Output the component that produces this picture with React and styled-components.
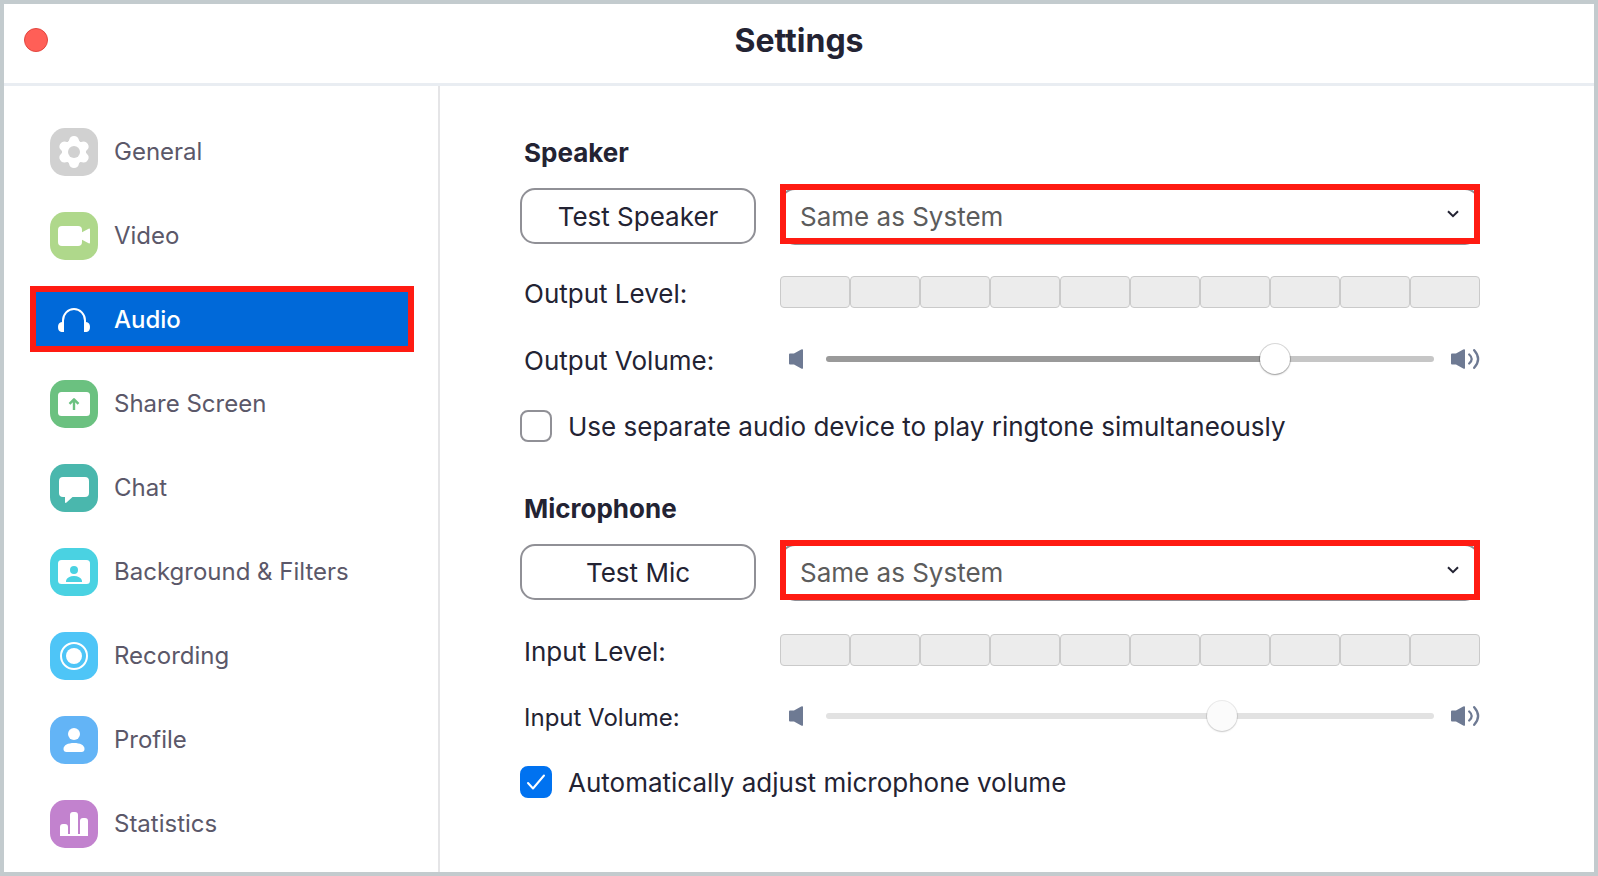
import React, { useState } from "react";
import styled, { createGlobalStyle } from "styled-components";

const colors = {
    frame: "#c3cbce",
    line: "#e5e5e7",
    text: "#232333",
    muted: "#5b5869",
    control: "#909096",
    red: "#ff1b12",
    blue: "#0069d9",
    checked: "#0072f0",
    speaker: "#6e7a93",
};

const categories = [
    { name: "General", color: "#d1d1d1" },
    { name: "Video", color: "#afd88b" },
    { name: "Audio", color: "transparent" },
    { name: "Share Screen", color: "#6bc180" },
    { name: "Chat", color: "#4ab7ad" },
    { name: "Background & Filters", color: "#4ad2e2" },
    { name: "Recording", color: "#4ec5f7" },
    { name: "Profile", color: "#63b4f6" },
    { name: "Statistics", color: "#c282ce" },
];

const CategoryDrawing = ({ name, color }) => {
    switch (name) {
        case "General":
            return (
                <>
                    {[0, 60, 120, 180, 240, 300].map((angle) => (
                        <path key={angle} d="M17.6 14.2Q19 13.8 19.2 11.8Q20 8 24 8T28.8 11.8Q29 13.8 30.4 14.2L24 24Z" transform={`rotate(${angle} 24 24)`} />
                    ))}
                    <circle cx="24" cy="24" r="11.8" />
                    <circle cx="24" cy="24" r="6" fill={color} />
                </>
            );
        case "Video":
            return (
                <>
                    <rect x="8" y="14" width="24" height="20" rx="4" />
                    <path d="M32 20.2L38.6 16.7Q40 16.2 40 17.6V30.4Q40 31.8 38.6 31.3L32 27.8Z" />
                </>
            );
        case "Audio":
            return (
                <>
                    <path d="M13 28V24.5A11 11.5 0 0 1 35 24.5V28" fill="none" stroke="#fff" strokeWidth="2" />
                    <path d="M14 26.3V36H11.5Q8 35.6 8 31Q8 26.3 12 26Z" />
                    <path d="M34 26.3V36H36.5Q40 35.6 40 31Q40 26.3 36 26Z" />
                </>
            );
        case "Share Screen":
            return (
                <>
                    <rect x="8" y="12" width="32" height="24" rx="3.5" />
                    <path d="M24 30V19.5M19.5 23.8L24 19.3L28.5 23.8" fill="none" stroke={color} strokeWidth="2.4" strokeLinejoin="round" />
                </>
            );
        case "Chat":
            return <path d="M13 13H35Q39 13 39 17V29Q39 33 35 33H22.5L16.5 38.6Q15 39.6 15 38V33H13Q9 33 9 29V17Q9 13 13 13Z" />;
        case "Background & Filters":
            return (
                <>
                    <rect x="8" y="12" width="32" height="24" rx="3.5" />
                    <circle cx="24" cy="22" r="4" fill={color} />
                    <path d="M16 34V32.5C17 29.5 20 28 24 28S31 29.5 32 32.5V34Z" fill={color} />
                </>
            );
        case "Recording":
            return (
                <>
                    <circle cx="24" cy="24" r="13" fill="none" stroke="#fff" strokeWidth="2" />
                    <circle cx="24" cy="24" r="8" />
                </>
            );
        case "Profile":
            return (
                <>
                    <circle cx="24" cy="18" r="6" />
                    <path d="M16.5 36Q13.5 36 13.5 33C13.5 29 18 27 24 27S34.5 29 34.5 33Q34.5 36 31.5 36Z" />
                </>
            );
        default:
            return <path d="M10 36V27Q10 24 13 24H15Q18 24 18 27V34H20V15Q20 12 23 12H25Q28 12 28 15V34H30V21Q30 18 33 18H35Q38 18 38 21V36Z" />;
    }
};

const VolumeIcon = ({ loud }) => (
    <svg width={loud ? 30 : 16} height="20" viewBox={loud ? "0 0 30 20" : "0 0 16 20"} aria-hidden="true">
        <path d="M2 4.5H6L13.2 .4Q15 -.3 15 1V19Q15 20.3 13.2 19.6L6 15.5H2Q1 15.5 1 14.5V5.5Q1 4.5 2 4.5Z" fill={colors.speaker} />
        {loud && (
            <g fill="none" stroke={colors.speaker} strokeWidth="2.3" strokeLinecap="round">
                <path d="M19.2 5.5Q24.2 10 19.2 14.5" />
                <path d="M24.2 1.2Q32 10 24.2 18.8" />
            </g>
        )}
    </svg>
);

const Device = ({ id, label, testLabel }) => (
    <DeviceRow>
        <TestButton type="button">{testLabel}</TestButton>
        <SelectBox>
            <Select id={id} aria-label={label} defaultValue="system">
                <option value="system">Same as System</option>
            </Select>
            <Highlight />
            <Chevron viewBox="0 0 12 8" aria-hidden="true">
                <path d="M1 1.2L6 6.2L11 1.2" fill="none" stroke={colors.text} strokeWidth="2" />
            </Chevron>
        </SelectBox>
    </DeviceRow>
);

const Level = ({ label, space }) => (
    <Row $space={space}>
        <Label as="span">{label}</Label>
        <Meter role="img" aria-label={label}>
            {Array.from({ length: 10 }, (_, i) => <Segment key={i} />)}
        </Meter>
    </Row>
);

const Volume = ({ id, label, space, initial, disabled, small }) => {
    const [ value, setValue ] = useState(initial);

    return (
        <Row $space={space}>
            <Label htmlFor={id} $small={small}>{label}</Label>
            <VolumeControl>
                <VolumeIcon />
                <Slider
                    id={id}
                    type="range"
                    min="0"
                    max="100"
                    value={value}
                    disabled={disabled}
                    style={{ "--fill": `${value}%` }}
                    onChange={(event) => setValue(Number(event.target.value))}
                />
                <VolumeIcon loud />
            </VolumeControl>
        </Row>
    );
};

const CheckOption = ({ id, label, space, initial }) => {
    const [ checked, setChecked ] = useState(initial);

    return (
        <Option $space={space} htmlFor={id}>
            <CheckCell>
                <Checkbox id={id} type="checkbox" checked={checked} onChange={() => setChecked(!checked)} />
                {checked && (
                    <Tick viewBox="0 0 32 32" aria-hidden="true">
                        <path d="M8 17L13 22.5L24 9.5" fill="none" stroke="#fff" strokeWidth="2" strokeLinecap="round" strokeLinejoin="round" />
                    </Tick>
                )}
            </CheckCell>
            {label}
        </Option>
    );
};

const App = () => {
    const [ current, setCurrent ] = useState("Audio");

    return (
        <>
            <GlobalStyle />
            <Window>
                <TitleBar>
                    <CloseButton type="button" aria-label="Close" />
                    <Title>Settings</Title>
                </TitleBar>
                <Body>
                    <Sidebar>
                        {categories.map(({ name, color }) => (
                            <Category
                                key={name}
                                href="#"
                                $active={name === current}
                                onClick={(event) => {
                                    event.preventDefault();
                                    setCurrent(name);
                                }}
                            >
                                <CategoryIcon viewBox="0 0 48 48" fill="#fff" aria-hidden="true">
                                    <rect width="48" height="48" rx="15" fill={color} />
                                    <CategoryDrawing name={name} color={color} />
                                </CategoryIcon>
                                <CategoryName>{name}</CategoryName>
                            </Category>
                        ))}
                    </Sidebar>
                    <Content>
                        <Section>
                            <Heading>Speaker</Heading>
                            <Device id="speaker" label="Speaker" testLabel="Test Speaker" />
                            <Level label="Output Level:" space={32} />
                            <Volume id="output" label="Output Volume:" space={35} initial={75} />
                            <CheckOption
                                id="ringtone"
                                label="Use separate audio device to play ringtone simultaneously"
                                space={35}
                                initial={false}
                            />
                        </Section>
                        <Section>
                            <Heading>Microphone</Heading>
                            <Device id="microphone" label="Microphone" testLabel="Test Mic" />
                            <Level label="Input Level:" space={34} />
                            <Volume id="input" label="Input Volume:" space={34} initial={66} disabled small />
                            <CheckOption
                                id="adjust"
                                label="Automatically adjust microphone volume"
                                space={34}
                                initial={true}
                            />
                        </Section>
                    </Content>
                </Body>
            </Window>
        </>
    );
};

const GlobalStyle = createGlobalStyle`
    *, *::before, *::after {
        box-sizing: border-box;
    }

    body {
        margin: 0;
        background: white;
        color: ${colors.text};
        font-family: Inter, "Liberation Sans", sans-serif;
    }

    button, select, input {
        margin: 0;
        font-family: inherit;
    }
`;

const Window = styled.div`
    display: flex;
    flex-direction: column;
    min-height: 100vh;
    border: 4px solid ${colors.frame};
`;

const TitleBar = styled.header`
    display: grid;
    grid-template-columns: 24px 1fr 24px;
    align-items: center;
    height: 82px;
    padding: 0 20px 7px;
    border-bottom: 3px solid #e9edf2;
`;

const CloseButton = styled.button`
    width: 24px;
    height: 24px;
    padding: 0;
    border: 1px solid #e2463f;
    border-radius: 50%;
    background: #ff5f57;
`;

const Title = styled.h1`
    margin: 0;
    padding-top: 2px;
    font-size: 32px;
    line-height: 40px;
    font-weight: 700;
    text-align: center;
`;

const Body = styled.div`
    display: flex;
    flex: 1;
`;

const Sidebar = styled.nav`
    display: flex;
    flex-direction: column;
    gap: 18px;
    width: 436px;
    flex-shrink: 0;
    padding: 32px 24px 16px 26px;
    border-right: 2px solid ${colors.line};
`;

const Category = styled.a`
    display: flex;
    align-items: center;
    gap: 16px;
    height: 66px;
    padding: 4px 14px 2px;
    border: 6px solid ${(props) => (props.$active ? colors.red : "transparent")};
    background: ${(props) => (props.$active ? colors.blue : "transparent")};
    color: ${(props) => (props.$active ? "white" : colors.muted)};
    font-size: 24px;
    font-weight: ${(props) => (props.$active ? 500 : 400)};
    text-decoration: none;
`;

const CategoryIcon = styled.svg`
    width: 48px;
    height: 48px;
    flex-shrink: 0;
`;

const CategoryName = styled.span`
    line-height: 28px;
`;

const Content = styled.main`
    flex: 1;
    padding: 51px 114px 0 80px;
`;

const Section = styled.section`
    margin-bottom: 49px;
`;

const Heading = styled.h2`
    margin: 0 0 19px 4px;
    font-size: 26px;
    line-height: 32px;
    font-weight: 650;
`;

const DeviceRow = styled.div`
    display: grid;
    grid-template-columns: 236px 1fr;
    gap: 24px;
    height: 56px;
`;

const TestButton = styled.button`
    height: 56px;
    border: 2px solid ${colors.control};
    border-radius: 15px;
    background: white;
    color: ${colors.text};
    font-size: 26px;
`;

const SelectBox = styled.div`
    position: relative;
    height: 57px;
`;

const Select = styled.select`
    display: block;
    width: 100%;
    height: 100%;
    padding: 0 48px 0 18px;
    border: 2px solid ${colors.control};
    border-radius: 15px;
    background: white;
    color: #5c5c5c;
    font-size: 26px;
    appearance: none;
`;

const Highlight = styled.div`
    position: absolute;
    inset: -4px 0 1px;
    border: 6px solid ${colors.red};
    pointer-events: none;
`;

const Chevron = styled.svg`
    position: absolute;
    top: 22px;
    right: 21px;
    width: 12px;
    height: 8px;
    pointer-events: none;
`;

const Row = styled.div`
    display: grid;
    grid-template-columns: 236px 1fr;
    gap: 24px;
    height: 32px;
    margin-top: ${(props) => props.$space}px;
`;

const Label = styled.label`
    padding: 4px 0 0 4px;
    font-size: ${(props) => (props.$small ? 24 : 26)}px;
    line-height: 28px;
    white-space: nowrap;
`;

const Meter = styled.div`
    display: flex;
`;

const Segment = styled.span`
    flex: 1;
    border: 1px solid #cacaca;
    border-radius: 4px;
    background: #ececec;
`;

const VolumeControl = styled.div`
    display: flex;
    align-items: center;
    padding-left: 8px;

    & svg {
        flex-shrink: 0;
    }
`;

const Slider = styled.input`
    flex: 1;
    min-width: 0;
    height: 32px;
    margin: 0 16px 0 22px;
    background: transparent;
    appearance: none;

    &::-webkit-slider-runnable-track {
        height: 6px;
        border-radius: 3px;
        background: linear-gradient(to right, #9a9a9a var(--fill), #c6c6c6 var(--fill));
    }

    &::-webkit-slider-thumb {
        width: 30px;
        height: 30px;
        margin-top: -12px;
        border: none;
        border-radius: 50%;
        background: white;
        box-shadow: 0 0 0 1px rgba(0, 0, 0, 0.14), 0 1px 2px rgba(0, 0, 0, 0.3);
        appearance: none;
    }

    &:disabled::-webkit-slider-runnable-track {
        background: #e2e2e2;
    }

    &:disabled::-webkit-slider-thumb {
        background: #fbfbfb;
        box-shadow: 0 0 0 1px rgba(0, 0, 0, 0.08), 0 1px 2px rgba(0, 0, 0, 0.15);
    }
`;

const Option = styled.label`
    display: flex;
    gap: 16px;
    width: fit-content;
    margin-top: ${(props) => props.$space}px;
    font-size: 26px;
    line-height: 34px;
`;

const CheckCell = styled.span`
    display: grid;
    width: 32px;
    height: 32px;
    flex-shrink: 0;
`;

const Checkbox = styled.input`
    grid-area: 1 / 1;
    width: 32px;
    height: 32px;
    border: 2px solid ${colors.control};
    border-radius: 8px;
    background: white;
    appearance: none;

    &:checked {
        border-color: ${colors.checked};
        background: ${colors.checked};
    }
`;

const Tick = styled.svg`
    grid-area: 1 / 1;
    width: 32px;
    height: 32px;
    pointer-events: none;
`;

export default App;
